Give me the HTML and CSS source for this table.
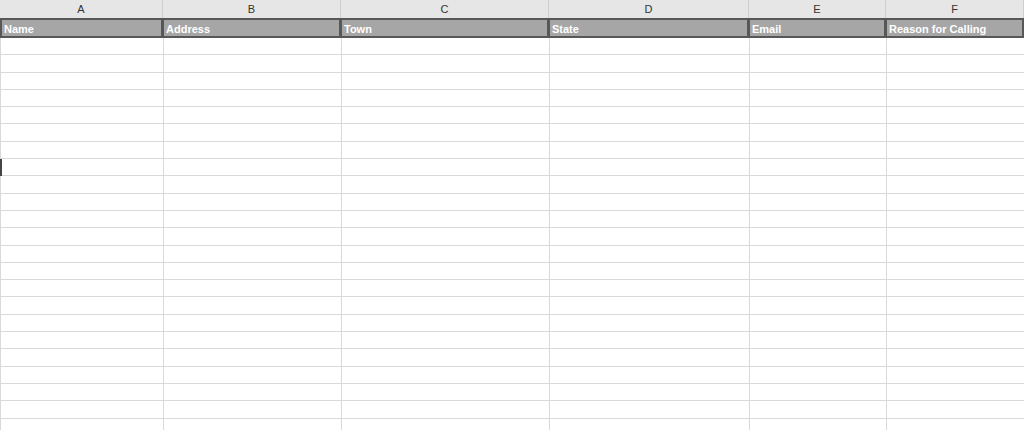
FILE: index.html
```html
<!DOCTYPE html>
<html lang="en">
  <head>
    <meta charset="UTF-8" />
    <meta name="viewport" content="width=device-width, initial-scale=1.0" />
    <title>Call Log</title>
    <link rel="stylesheet" href="styles.css">
  </head>
  <body>
    <div class="sheet">
      <div class="col-head">A</div>
      <div class="col-head">B</div>
      <div class="col-head">C</div>
      <div class="col-head">D</div>
      <div class="col-head">E</div>
      <div class="col-head">F</div>

      <div class="head-cell">Name</div>
      <div class="head-cell">Address</div>
      <div class="head-cell">Town</div>
      <div class="head-cell">State</div>
      <div class="head-cell">Email</div>
      <div class="head-cell">Reason for Calling</div>
    </div>
    <div class="sheet body-rows" id="rows"></div>
    <div class="active-mark"></div>

    <script>
      const rows = document.getElementById("rows");
      for (let i = 0; i < 23 * 6; i++) {
        let cell = document.createElement("div");
        cell.className = "cell";
        rows.appendChild(cell);
      }
    </script>
  </body>
</html>
```

FILE: styles.css
```css
html, body {
  margin: 0;
  height: 430px;
  overflow: hidden;
  background-color: white;
  font-family: "Liberation Sans", Arial, sans-serif;
}
.sheet {
  display: grid;
  grid-template-columns: 163px 178px 208px 200px 137px 138px;
}
.col-head {
  height: 18px;
  line-height: 18px;
  background-color: #e6e6e6;
  border-right: 1px solid #cfcfcf;
  box-sizing: border-box;
  text-align: center;
  font-size: 11px;
  color: #333;
}
.head-cell {
  height: 20px;
  line-height: 18px;
  background-color: #a6a6a6;
  border: 2px solid #575757;
  border-left-width: 1px;
  box-sizing: border-box;
  padding-left: 2px;
  font-size: 11px;
  font-weight: bold;
  color: white;
  white-space: nowrap;
  overflow: hidden;
}
.col-head + .head-cell {
  border-left-width: 2px;
}
.body-rows {
  grid-auto-rows: 17.3px;
  border-left: 1px solid #d9d9d9;
}
.body-rows .cell:nth-child(6n+1) {
  margin-left: -1px;
}
.cell {
  border-right: 1px solid #d9d9d9;
  border-bottom: 1px solid #d9d9d9;
  box-sizing: border-box;
}
.active-mark {
  position: absolute;
  left: 0;
  top: 159px;
  width: 2px;
  height: 17px;
  background-color: #444;
}
```
